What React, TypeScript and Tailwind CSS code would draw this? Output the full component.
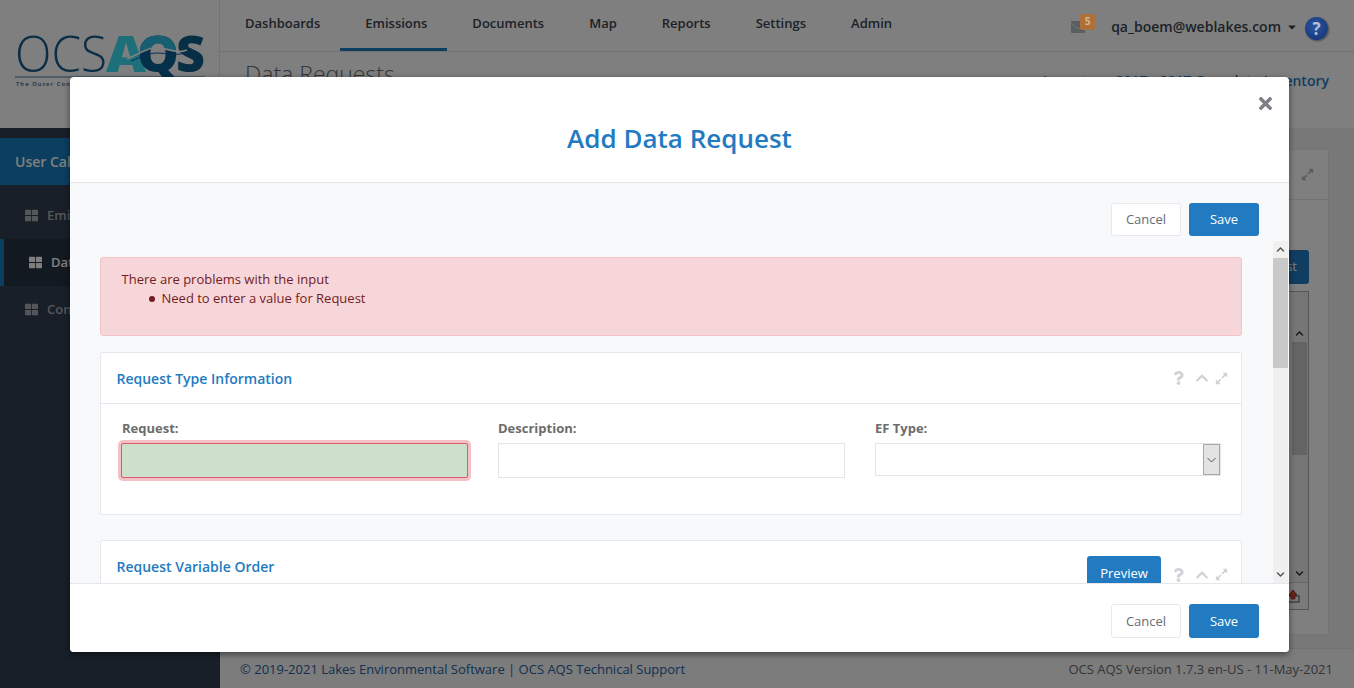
import { FaThLarge, FaChevronUp, FaChevronDown, FaExpandAlt, FaQuestion, FaCaretDown, FaTimes } from "react-icons/fa";

const Logo = () => (
  <svg width="194" height="64" viewBox="0 0 194 64" className="block">
    <defs>
      <clipPath id="qTop">
        <path d="M100 -10H200V17C160 20 150 11 138 13C128 15 122 20 118 22H100Z" />
      </clipPath>
    </defs>
    <text x="0" y="36.5" fontFamily="'Open Sans', sans-serif" fontWeight="300" fontSize="50" fill="#165a8a" textLength="92" lengthAdjust="spacingAndGlyphs">OCS</text>
    <text x="91" y="36.5" fontFamily="'Open Sans', sans-serif" fontWeight="800" fontSize="50" fill="#3be0f5" textLength="40" lengthAdjust="spacingAndGlyphs">A</text>
    <text x="122" y="36.5" fontFamily="'Open Sans', sans-serif" fontWeight="800" fontSize="50" fill="#0a6094" textLength="42" lengthAdjust="spacingAndGlyphs">Q</text>
    <text x="122" y="36.5" fontFamily="'Open Sans', sans-serif" fontWeight="800" fontSize="50" fill="#2ebce0" textLength="42" lengthAdjust="spacingAndGlyphs" clipPath="url(#qTop)">Q</text>
    <text x="161" y="36.5" fontFamily="'Open Sans', sans-serif" fontWeight="800" fontSize="50" fill="#0c5c8a" textLength="29" lengthAdjust="spacingAndGlyphs">S</text>
    <path d="M112 24C122 20 128 15 138 13C150 11 160 20 172 15" fill="none" stroke="#ffffff" strokeWidth="1.6" />
    <path d="M116 26C126 22 134 18 142 18C152 18 160 21 170 18" fill="none" stroke="#1a50b0" strokeWidth="1" />
    <path d="M0 42H190" stroke="#165a8a" strokeWidth="0.8" />
    <text x="1" y="51" fontFamily="'Open Sans', sans-serif" fontWeight="600" fontSize="5.8" letterSpacing="1.1" fill="#165a8a">The Outer Continental Shelf Air Quality System</text>
  </svg>
);

const SideItem = ({ label, active }: { label: string; active?: boolean }) => (
  <div className={active ? "h-[47px] flex items-center gap-[9px] border-l-4 border-[#1a7dc0] pl-[25px] bg-[#263241] text-white font-semibold text-[13px]" : "h-[47px] flex items-center gap-[9px] pl-[25px] text-[#a9adb3] font-semibold text-[13px]"}>
    <FaThLarge className="text-[13px]" />
    <span>{label}</span>
  </div>
);

const NavTab = ({ label, active }: { label: string; active?: boolean }) => (
  <div className={active ? "h-[51px] pl-[25px] pr-[20px] -ml-[2.5px] mr-[2.5px] flex items-start pt-[14px] border-b-[3px] border-[#1a7dc0] text-[13px] font-semibold text-[#3b4450]" : "h-[51px] px-[22.5px] flex items-start pt-[14px] text-[13px] font-semibold text-[#3b4450]"}>
    {label}
  </div>
);

const PanelTools = () => (
  <div className="flex items-center text-[#cfd2d6]">
    <FaQuestion className="text-[14px] w-[11px]" />
    <FaChevronUp className="text-[14px] ml-[11px]" />
    <FaExpandAlt className="text-[13px] ml-[6px]" />
  </div>
);

const Cancel = ({ tall }: { tall?: boolean }) => (
  <button className={tall ? "w-[70px] h-[34px] pt-[1px] bg-white border border-[#e6e8ec] rounded-[3px] text-[13px] text-[#666c73]" : "w-[70px] h-[33px] bg-white border border-[#e6e8ec] rounded-[3px] text-[13px] text-[#666c73]"}>Cancel</button>
);
const Save = ({ tall }: { tall?: boolean }) => (
  <button className={tall ? "w-[70px] h-[34px] pt-[1px] bg-[#227bc1] rounded-[3px] text-[13px] text-white" : "w-[70px] h-[33px] bg-[#227bc1] rounded-[3px] text-[13px] text-white"}>Save</button>
);

const Field = ({ label, indent, children }: { label: string; indent?: boolean; children: React.ReactNode }) => (
  <div className="w-[347px]">
    <div className={indent ? "text-[13px] font-bold text-[#6c6c6c] leading-[18px] pl-[1px] mb-[6px]" : "text-[13px] font-bold text-[#6c6c6c] leading-[18px] mb-[6px]"}>{label}</div>
    {children}
  </div>
);

export default function App() {
  return (
    <div className="relative w-full h-[688px] overflow-hidden flex font-['Open_Sans',sans-serif] bg-white">
      {/* App shell */}
      <aside className="w-[220px] shrink-0 flex flex-col bg-[#303f52]">
        <div className="h-[128px] bg-white border-r border-[#e4e4e4] pl-[15px] pt-[35px]"><Logo /></div>
        <div className="h-[10px] bg-[#303f52]" />
        <div className="h-[47px] bg-[#187dc0] flex items-center pl-[15px] text-white font-semibold text-[14px]">User Calculations</div>
        <div className="h-[7px]" />
        <SideItem label="Emissions" />
        <SideItem label="Data Requests" active />
        <SideItem label="Configuration" />
      </aside>
      <main className="flex-1 flex flex-col min-w-0">
        <header className="h-[52px] flex items-center justify-between border-b border-[#e4e4e4] bg-white pl-[2.5px] pr-[26px]">
          <nav className="flex">
            <NavTab label="Dashboards" />
            <NavTab label="Emissions" active />
            <NavTab label="Documents" />
            <NavTab label="Map" />
            <NavTab label="Reports" />
            <NavTab label="Settings" />
            <NavTab label="Admin" />
          </nav>
          <div className="flex items-center pt-[2px]">
            <div className="relative mr-[26px] w-[14px] h-[12px]">
              <svg width="14" height="12" viewBox="0 0 14 12" className="block">
                <rect width="14" height="12" rx="1" fill="#b4bec8" />
                <path d="M0 2L7 8L14 5" fill="none" stroke="#e8e8e8" strokeWidth="1" />
              </svg>
              <span className="absolute z-20 -top-[7px] left-[9px] w-[15px] h-[16px] rounded-[2px] bg-[#ad7138] text-[#d8b48c] text-[10px] font-bold flex items-center justify-center">5</span>
            </div>
            <span className="text-[14px] font-semibold text-[#3b4450]">qa_boem@weblakes.com</span>
            <FaCaretDown className="text-[12px] text-[#3b4450] ml-[4.5px]" />
            <span className="relative z-20 ml-[7.5px] mt-[4px] w-[23px] h-[23px] rounded-full bg-[radial-gradient(circle_at_45%_40%,#2a55a5,#12306a)] shadow-[1px_1px_2px_rgba(0,0,0,0.4)] text-[#b4bfd4] font-bold text-[17px] leading-none flex items-center justify-center">?</span>
          </div>
        </header>
        <div className="h-[76px] flex justify-between items-start bg-white pl-[25px] pr-[25px] pt-[6px]">
          <div className="text-[23px] font-light text-[#666c73] leading-[32px]">Data Requests</div>
          <div className="text-[14px] font-semibold text-[#666c73] pt-[12px]">Inventory: <span className="text-[#227bc1]">2017 - 2017 Complete Inventory</span></div>
        </div>
        <div className="flex-1 bg-[#f0f0f0] pt-[21px] pr-[25px] pl-[20px] pb-[13px] flex flex-col min-h-0">
          <div className="flex-1 bg-white border border-[#e6e6e6] flex flex-col">
            <div className="h-[50px] border-b border-[#e6e6e6] flex items-center justify-end pr-[14px] text-[#b8b8b8]">
              <FaExpandAlt className="text-[13px]" />
            </div>
            <div className="flex-1 flex flex-col items-end pr-[19px]">
              <div className="mt-[50px] w-[120px] h-[34px] bg-[#227bc1] rounded-[3px] text-white text-[13px] flex items-center justify-end pr-[12px]">Request</div>
              <div className="mt-[7px] w-[400px] h-[319px] border border-[#aaaaaa] flex flex-col">
                <div className="flex-1 flex justify-end">
                  <div className="w-[17px] bg-[#ececec] flex flex-col items-center relative">
                    <div className="h-[17px] mt-[33px] flex items-center"><FaChevronUp className="text-[9px] text-[#333]" /></div>
                    <div className="w-[15px] h-[113px] bg-[#c8c8c8]" />
                    <div className="flex-1" />
                    <div className="h-[17px] flex items-center"><FaChevronDown className="text-[9px] text-[#333]" /></div>
                  </div>
                </div>
                <div className="h-[27px] border-t border-[#cccccc] bg-[#f4f4f4] flex items-center justify-end pr-[8px]">
                  <svg width="14" height="14" viewBox="0 0 14 14">
                    <rect x="1" y="7" width="12" height="6" fill="none" stroke="#444" />
                    <path d="M7 1L11 6H9V10H5V6H3Z" fill="#d9442c" stroke="#7a2415" strokeWidth="0.7" />
                  </svg>
                </div>
              </div>
            </div>
          </div>
        </div>
        <footer className="h-[40px] shrink-0 bg-[#f8f8f8] border-t border-[#e6e6e6] flex items-center justify-between pl-[20px] pr-[21px] pt-[3px] text-[13px]">
          <span className="text-[#2560a0]">© 2019-2021 Lakes Environmental Software | OCS AQS Technical Support</span>
          <span className="text-[#666c73]">OCS AQS Version 1.7.3 en-US - 11-May-2021</span>
        </footer>
      </main>

      {/* Backdrop */}
      <div className="absolute inset-0 z-10 bg-black/50" />

      {/* Modal */}
      <div className="absolute z-30 left-[70px] top-[77px] w-[1219px] h-[575px] bg-white rounded-[4px] shadow-[0_2px_6px_rgba(0,0,0,0.5)] flex flex-col overflow-hidden">
        <div className="relative h-[106px] shrink-0 border-b border-[#e4e6ea] flex items-center justify-center pt-[17px]">
          <h1 className="text-[26px] font-semibold text-[#227bc1] leading-[36px]">Add Data Request</h1>
          <FaTimes className="absolute right-[14px] top-[17px] text-[19px] text-[#7d7f86]" />
        </div>
        <div className="flex-1 min-h-0 bg-[#f8f9fb] flex flex-col">
          <div className="h-[58px] shrink-0 flex justify-end items-start gap-[8px] pt-[20px] pr-[30px]">
            <Cancel />
            <Save />
          </div>
          <div className="flex-1 min-h-0 flex">
            <div className="flex-1 min-w-0 overflow-hidden pt-[16px] pl-[30px] pr-[31px]">
              <div className="h-[79px] bg-[#f7d6d9] border border-[#f2c4c8] rounded-[3px] pl-[20.5px] pt-[12px] text-[13px] leading-[19px] text-[#721c24]">
                <div>There are problems with the input</div>
                <div className="flex items-center pl-[27px]">
                  <span className="w-[6px] h-[6px] rounded-full bg-[#721c24] mr-[7px]" />
                  <span>Need to enter a value for Request</span>
                </div>
              </div>
              <section className="mt-[16px] h-[163px] bg-white border border-[#e6e9ed] rounded-[2px]">
                <div className="h-[51px] border-b border-[#e6e9ed] flex items-center justify-between pl-[15.5px] pr-[13px]">
                  <h2 className="text-[14px] font-semibold text-[#227bc1]">Request Type Information</h2>
                  <PanelTools />
                </div>
                <div className="flex gap-[30px] pl-[20px] pt-[15px]">
                  <Field label="Request:" indent>
                    <div className="h-[35px] bg-[#cce0cc] border border-[#dc5b68] shadow-[0_0_0_3px_#f4c2c6] rounded-[2px] mt-[1px]" />
                  </Field>
                  <Field label="Description:">
                    <div className="h-[35px] bg-white border border-[#e2e5e9]" />
                  </Field>
                  <Field label="EF Type:">
                    <div className="h-[33px] mr-[1px] bg-white border border-[#e2e5e9] flex justify-end">
                      <div className="w-[17px] bg-[#e3e3e3] border border-[#a8a8a8] flex items-center justify-center">
                        <svg width="9" height="6" viewBox="0 0 9 6" className="block">
                          <path d="M0.5 1L4.5 5L8.5 1" fill="none" stroke="#555" strokeWidth="1" />
                        </svg>
                      </div>
                    </div>
                  </Field>
                </div>
              </section>
              <section className="mt-[25px] h-[100px] bg-white border border-[#e6e9ed] rounded-[2px]">
                <div className="h-[51px] flex items-start justify-between pl-[15.5px] pr-[13px]">
                  <h2 className="text-[14px] font-semibold text-[#227bc1] pt-[15px]">Request Variable Order</h2>
                  <div className="flex items-center pt-[15px]">
                    <button className="w-[74px] h-[34px] pt-[1px] bg-[#227bc1] rounded-[3px] text-white text-[13px] mr-[12px]">Preview</button>
                    <div className="pt-[3px]"><PanelTools /></div>
                  </div>
                </div>
              </section>
            </div>
            <div className="w-[15px] shrink-0 mr-[1px] bg-[#f0f0f0] flex flex-col items-center">
              <div className="h-[17px] flex items-center"><FaChevronUp className="text-[9px] text-[#555]" /></div>
              <div className="w-full h-[110px] bg-[#c9c9c9]" />
              <div className="flex-1" />
              <div className="h-[17px] flex items-center"><FaChevronDown className="text-[9px] text-[#555]" /></div>
            </div>
          </div>
        </div>
        <div className="h-[69px] shrink-0 bg-white border-t border-[#e4e6ea] flex justify-end items-start gap-[8px] pt-[20px] pr-[30px]">
          <Cancel tall />
          <Save tall />
        </div>
      </div>
    </div>
  );
}
